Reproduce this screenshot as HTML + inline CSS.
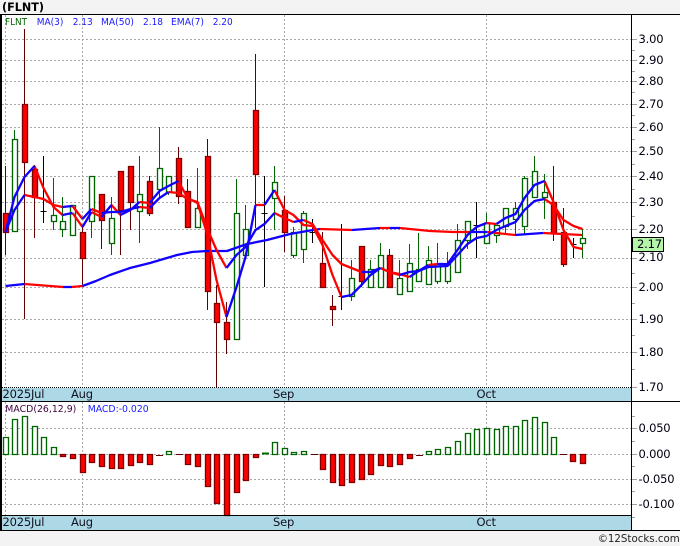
<!DOCTYPE html>
<html><head><meta charset="utf-8"><style>
html,body{margin:0;padding:0;background:#f3f3f3}
svg{display:block}
text{font-family:"DejaVu Sans","Liberation Sans",sans-serif}
</style></head><body>
<svg xmlns="http://www.w3.org/2000/svg" width="680" height="546" viewBox="0 0 680 546">
<rect width="680" height="546" fill="#f3f3f3"/>
<rect x="0" y="14" width="680" height="517" fill="#fff"/>
<rect x="2" y="388" width="629" height="13" fill="#add8e6"/>
<rect x="2" y="516" width="629" height="14" fill="#add8e6"/>
<g fill="none" stroke="#a8a8a8" stroke-width="1" stroke-dasharray="2 2">
<path d="M2 39.5H632M2 60.5H632M2 81.5H632M2 104.5H632M2 127.5H632M2 151.5H632M2 176.5H632M2 202.5H632M2 229.5H632M2 258.5H632M2 287.5H632M2 319.5H632M2 352.5H632"/>
<path d="M2 428.5H632M2 454.5H632M2 479.5H632M2 504.5H632"/>
<path d="M5.5 15V388M82.5 15V388M284.5 15V388M486.5 15V388M5.5 402V516M82.5 402V516M284.5 402V516M486.5 402V516"/>
</g>
<path d="M2 387.5H632" stroke="#000" stroke-dasharray="1 1" fill="none"/>
<g fill="none" stroke="#a0a0a0">
<path d="M632 39.5h5M632 60.5h5M632 81.5h5M632 104.5h5M632 127.5h5M632 151.5h5M632 176.5h5M632 202.5h5M632 229.5h5M632 258.5h5M632 287.5h5M632 319.5h5M632 352.5h5M632 387.5h5"/>
<path d="M632 50.5h3M632 71.5h3M632 92.5h3M632 115.5h3M632 139.5h3M632 164.5h3M632 189.5h3M632 216.5h3M632 273.5h3M632 303.5h3M632 335.5h3M632 369.5h3"/>
<path d="M632 428.5h5M632 454.5h5M632 479.5h5M632 504.5h5M632 416.5h3M632 441.5h3M632 466.5h3M632 491.5h3M632 517.5h3"/>
</g>
<!-- wicks -->
<g fill="none" stroke-width="1">
<path stroke="#006400" d="M14.5 130V232M53.5 178V230M62.5 197V237M72.5 205V235M91.5 176V238M111.5 197V255M139.5 156V243M159.5 127V197M168.5 177V195M197.5 168V227M236.5 179V339M245.5 205V255M274.5 166V230M293.5 227V258M303.5 211V263M351.5 260V301M370.5 260V287M380.5 243V287M399.5 260V294M409.5 244V291M418.5 233V281M428.5 246V284M437.5 243V284M447.5 252V284M457.5 224V272M467.5 221V249M486.5 213V243M496.5 225V243M505.5 208V233M515.5 202V234M524.5 176V235M534.5 156V197M544.5 174V219M582.5 229V258"/>
<path stroke="#600000" d="M5.5 166V255M24.5 29V319M34.5 165V238M82.5 227V287M101.5 194V249M120.5 171V255M130.5 166V230M149.5 176V216M178.5 147V204M187.5 179V227M207.5 139V310M216.5 285V387M226.5 302V354M255.5 54V228M284.5 196V252M322.5 232V287M332.5 295V326M361.5 246V287M389.5 249V287M553.5 166V241M563.5 208V267"/>
<path stroke="#000" d="M43.5 156V223M40.5 211.5h6M264.5 176V287M261.5 213.5h6M312.5 219V243M309.5 232.5h6M341.5 224V310M338.5 296.5h6M476.5 202V258M473.5 225.5h6M573.5 238V258M570.5 244.5h6"/>
</g>
<!-- green bodies -->
<path fill="#fff" stroke="#006400" stroke-width="1.35" d="M12.5 139.5h5v92h-5zM51.5 215.5h5v6h-5zM60.5 221.5h5v8h-5zM70.5 205.5h5v30h-5zM89.5 176.5h5v45h-5zM109.5 218.5h5v25h-5zM137.5 194.5h5v17h-5zM157.5 168.5h5v21h-5zM166.5 176.5h5v16h-5zM195.5 208.5h5v19h-5zM234.5 213.5h5v126h-5zM243.5 229.5h5v26h-5zM272.5 182.5h5v16h-5zM291.5 232.5h5v23h-5zM301.5 213.5h5v36h-5zM349.5 278.5h5v18h-5zM368.5 269.5h5v18h-5zM378.5 255.5h5v32h-5zM397.5 278.5h5v16h-5zM407.5 263.5h5v28h-5zM416.5 269.5h5v12h-5zM426.5 260.5h5v24h-5zM435.5 264.5h5v17h-5zM445.5 264.5h5v17h-5zM455.5 240.5h5v32h-5zM465.5 221.5h5v19h-5zM484.5 223.5h5v20h-5zM494.5 225.5h5v10h-5zM503.5 208.5h5v18h-5zM513.5 208.5h5v11h-5zM522.5 178.5h5v48h-5zM532.5 171.5h5v26h-5zM542.5 192.5h5v5h-5zM580.5 238.5h5v5h-5z"/>
<!-- red bodies -->
<path fill="#f00" stroke="#800000" stroke-width="1.35" d="M3.5 213.5h5v19h-5zM22.5 104.5h5v58h-5zM32.5 169.5h5v28h-5zM80.5 232.5h5v26h-5zM99.5 194.5h5v26h-5zM118.5 171.5h5v39h-5zM128.5 166.5h5v36h-5zM147.5 181.5h5v32h-5zM176.5 158.5h5v38h-5zM185.5 191.5h5v36h-5zM205.5 156.5h5v135h-5zM214.5 303.5h5v19h-5zM224.5 322.5h5v17h-5zM253.5 110.5h5v64h-5zM282.5 210.5h5v22h-5zM320.5 263.5h5v24h-5zM330.5 306.5h5v3h-5zM359.5 246.5h5v35h-5zM387.5 255.5h5v32h-5zM551.5 202.5h5v31h-5zM561.5 232.5h5v32h-5z"/>
<!-- lines -->
<g fill="none" stroke-width="2.3" stroke-linejoin="round">
<path stroke="#f00" d="M24.5 284L63 287M72 287L82.5 286M320 229L352 230M380 228L390 228M400 228L430 231 453 232 472 232M487 232L515 235M543 233L582 235"/>
<path stroke="#10f" d="M5.5 286L24.5 284M63 287L72 287M82.5 286L96 281 110 275 130 268 150 263 177 255 192 252 207 251 227 251 247 244 267 240 290 234 313 230 320 229M352 230L380 228M390 228L400 228M472 232L487 232M515 235L543 233"/>
<path stroke="#f00" d="M24.5 195L34.5 197 43.5 199 53.5 205 62.5 207M72.5 206L82.5 219M91.5 209L101.5 213M139.5 207L149.5 208M168.5 192L178.5 193 187.5 199 197.5 202 207.5 229 216.5 250 226.5 268M274.5 213L284.5 218 293.5 222M303.5 220L312.5 224 322.5 240 332.5 255 341.5 264 351.5 268 361.5 272M380.5 268L389.5 272 399.5 274 409.5 277M544.5 199L553.5 205 563.5 220 573.5 226 582.5 229"/>
<path stroke="#f00" d="M34.5 166L43.5 188 53.5 207 62.5 215M72.5 213L82.5 227M91.5 212L101.5 217M111.5 205L120.5 215M139.5 202L149.5 203M178.5 181L187.5 198 197.5 203 207.5 235 216.5 280 226.5 317M255.5 205L264.5 205M274.5 190L284.5 210 293.5 215 303.5 225 312.5 226 322.5 245 332.5 275 341.5 297M380.5 268L389.5 272 399.5 275M428.5 265L437.5 264M486.5 223L496.5 224M544.5 181L553.5 202 563.5 230 573.5 247 582.5 249"/>
<path stroke="#10f" d="M5.5 232L14.5 210 24.5 195M62.5 207L72.5 206M82.5 219L91.5 209M101.5 213L111.5 212 120.5 212 130.5 209 139.5 207M149.5 208L159.5 198 168.5 192M226.5 268L236.5 255 245.5 247 255.5 230 264.5 224 274.5 213M293.5 222L303.5 220M361.5 272L370.5 272 380.5 268M409.5 277L418.5 271 428.5 267 447.5 266 457.5 255 467.5 244 476.5 238 486.5 236 496.5 230 505.5 226 515.5 222 524.5 210 534.5 201 544.5 199"/>
<path stroke="#10f" d="M5.5 232L14.5 197 24.5 177 34.5 166M62.5 215L72.5 213M82.5 227L91.5 212M101.5 217L111.5 205M120.5 215L130.5 210 139.5 202M149.5 203L159.5 191 168.5 186 178.5 181M226.5 317L236.5 287 245.5 257 255.5 205M264.5 205L274.5 190M341.5 297L351.5 295 361.5 285 370.5 275 380.5 268M399.5 275L409.5 272 418.5 271 428.5 265M437.5 264L447.5 264 457.5 250 467.5 235 476.5 227 486.5 223M496.5 224L505.5 218 515.5 214 524.5 198 534.5 185 544.5 181"/>
</g>
<!-- MACD bars -->
<path fill="#fff" stroke="#006400" stroke-width="1.35" d="M3.5 437.5h5v17h-5zM12.5 419.5h5v35h-5zM22.5 416.5h5v38h-5zM32.5 426.5h5v28h-5zM41.5 437.5h5v17h-5zM51.5 447.5h5v7h-5zM166.5 451.5h5v3h-5zM272.5 442.5h5v12h-5zM282.5 448.5h5v6h-5zM291.5 452.5h5v2h-5zM301.5 451.5h5v3h-5zM426.5 451.5h5v3h-5zM435.5 449.5h5v5h-5zM445.5 447.5h5v7h-5zM455.5 441.5h5v13h-5zM465.5 433.5h5v21h-5zM474.5 429.5h5v25h-5zM484.5 428.5h5v26h-5zM494.5 429.5h5v25h-5zM503.5 426.5h5v28h-5zM513.5 426.5h5v28h-5zM522.5 420.5h5v34h-5zM532.5 417.5h5v37h-5zM542.5 422.5h5v32h-5zM551.5 437.5h5v17h-5z"/>
<path fill="#006400" d="M262 452.5h7v2h-7z"/>
<path fill="#f00" stroke="#800000" stroke-width="1.35" d="M60.5 454.5h5v2h-5zM70.5 454.5h5v4h-5zM80.5 454.5h5v18h-5zM89.5 454.5h5v8h-5zM99.5 454.5h5v12h-5zM109.5 454.5h5v14h-5zM118.5 454.5h5v14h-5zM128.5 454.5h5v11h-5zM137.5 454.5h5v8h-5zM147.5 454.5h5v10h-5zM185.5 454.5h5v10h-5zM195.5 454.5h5v12h-5zM205.5 454.5h5v32h-5zM214.5 454.5h5v49h-5zM224.5 454.5h5v61h-5zM234.5 454.5h5v38h-5zM243.5 454.5h5v26h-5zM253.5 454.5h5v3h-5zM320.5 454.5h5v15h-5zM330.5 454.5h5v28h-5zM339.5 454.5h5v31h-5zM349.5 454.5h5v28h-5zM359.5 454.5h5v25h-5zM368.5 454.5h5v20h-5zM378.5 454.5h5v11h-5zM387.5 454.5h5v12h-5zM397.5 454.5h5v10h-5zM407.5 454.5h5v4h-5zM570.5 454.5h5v7h-5zM580.5 454.5h5v9h-5z"/>
<path fill="none" stroke="#600000" stroke-width="1" d="M156 455.5h7M176 454.5h7M311 454.5h7M416 455.5h7M560 454.5h7"/>
<!-- frame -->
<rect x="0" y="14" width="680" height="1" fill="#000"/>
<rect x="0" y="14" width="2" height="517" fill="#000"/>
<rect x="631" y="14" width="1" height="517" fill="#000"/>
<rect x="0" y="401" width="680" height="1" fill="#000"/>
<rect x="0" y="515" width="632" height="1" fill="#000"/>
<rect x="0" y="530" width="680" height="1" fill="#000"/>
<!-- price tag -->
<rect x="632.5" y="237.5" width="31" height="14" fill="#b4f5a8" stroke="#000"/>
<!-- text -->
<text x="2" y="11" font-size="11.5" font-weight="700" fill="#000" textLength="42" lengthAdjust="spacingAndGlyphs">(FLNT)</text>
<g font-size="10" lengthAdjust="spacingAndGlyphs">
<text x="5" y="25" fill="#006400" textLength="22" lengthAdjust="spacingAndGlyphs">FLNT</text>
<g fill="#1a1aff">
<text x="36.7" y="25" textLength="26.7" lengthAdjust="spacingAndGlyphs">MA(3)</text><text x="72.7" y="25" textLength="20" lengthAdjust="spacingAndGlyphs">2.13</text>
<text x="101" y="25" textLength="33" lengthAdjust="spacingAndGlyphs">MA(50)</text><text x="143" y="25" textLength="20" lengthAdjust="spacingAndGlyphs">2.18</text>
<text x="171" y="25" textLength="33" lengthAdjust="spacingAndGlyphs">EMA(7)</text><text x="212.7" y="25" textLength="20" lengthAdjust="spacingAndGlyphs">2.20</text>
<text x="87.7" y="412" textLength="61" lengthAdjust="spacingAndGlyphs">MACD:-0.020</text>
</g>
<text x="5.3" y="412" fill="#400040" textLength="71" lengthAdjust="spacingAndGlyphs">MACD(26,12,9)</text>
</g>
<g font-size="11.5" fill="#112" style="letter-spacing:-.2px">
<text x="2.5" y="398">2025Jul</text><text x="71" y="398">Aug</text><text x="273" y="398">Sep</text><text x="476.5" y="398">Oct</text>
<text x="2.5" y="526">2025Jul</text><text x="71" y="526">Aug</text><text x="273" y="526">Sep</text><text x="476.5" y="526">Oct</text>
</g>
<g font-size="11.5" fill="#001" style="letter-spacing:-.2px">
<text x="638.5" y="43">3.00</text><text x="638.5" y="64">2.90</text><text x="638.5" y="85">2.80</text><text x="638.5" y="108">2.70</text><text x="638.5" y="131">2.60</text><text x="638.5" y="155">2.50</text><text x="638.5" y="180">2.40</text><text x="638.5" y="206">2.30</text><text x="638.5" y="233">2.20</text><text x="637" y="248">2.17</text><text x="638.5" y="261">2.10</text><text x="638.5" y="291">2.00</text><text x="638.5" y="323">1.90</text><text x="638.5" y="356">1.80</text><text x="638.5" y="391">1.70</text>
<text x="638.5" y="432">0.050</text><text x="638.5" y="458">0.000</text><text x="638.5" y="483">-0.050</text><text x="638.5" y="508">-0.100</text>
</g>
<text x="597.7" y="542" font-size="11" fill="#222" textLength="82" lengthAdjust="spacingAndGlyphs">©12Stocks.com</text>
</svg>
</body></html>
